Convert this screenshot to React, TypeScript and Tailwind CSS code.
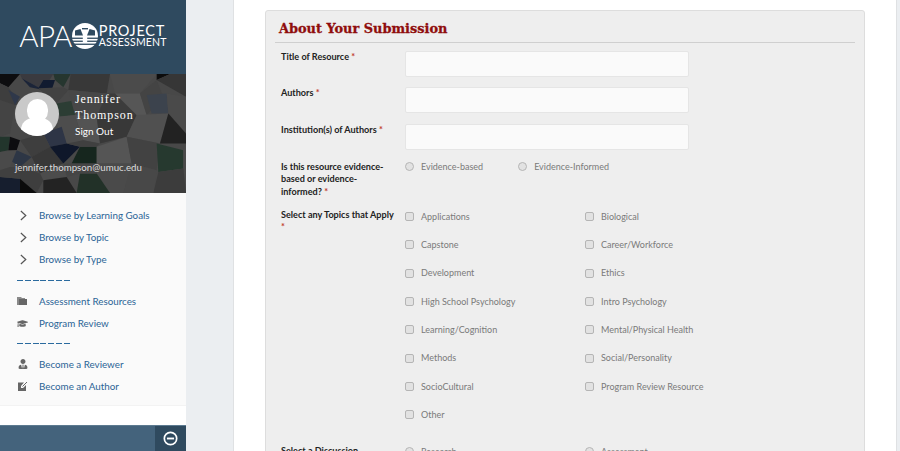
import React from "react";
import { FaGraduationCap, FaUserTie } from "react-icons/fa";

const polys: [string, string][] = [
  ["0,222 60,222 25,262 0,250", "#0d0d0f"],
  ["60,222 160,222 130,270 65,235", "#3a3a3f"],
  ["65,235 130,270 90,262", "#1b2438"],
  ["130,240 165,240 150,285 115,265", "#111b30"],
  ["160,222 212,222 190,262 165,240", "#26362f"],
  ["212,222 330,222 320,280 205,270", "#383838"],
  ["330,222 470,222 420,280 345,280", "#4b4b4b"],
  ["470,222 510,222 470,240", "#0c0c0c"],
  ["510,222 558,222 558,290 470,240", "#363636"],
  ["0,250 25,262 60,310 30,320 0,300", "#3e3e3e"],
  ["25,270 60,290 45,315", "#2f384a"],
  ["115,265 190,262 205,270 170,310", "#424242"],
  ["170,310 230,300 225,345 180,350", "#2c3d34"],
  ["205,270 320,280 290,350 225,345", "#474747"],
  ["320,280 345,280 410,345 290,350", "#3c3c3c"],
  ["345,280 420,280 440,345 410,345", "#565656"],
  ["420,280 470,240 490,290 440,345", "#444444"],
  ["440,285 500,280 505,340 455,340", "#3c434d"],
  ["500,280 558,290 558,400 505,340", "#4a4a4a"],
  ["0,300 45,315 30,400 0,410", "#444444"],
  ["170,350 225,345 250,420 180,440", "#4d4d4d"],
  ["130,400 185,380 200,430 150,440", "#2e3546"],
  ["225,345 290,350 300,430 250,420", "#535353"],
  ["290,350 410,345 380,410 300,430", "#383838"],
  ["410,345 505,340 480,430 380,410", "#505050"],
  ["505,340 558,400 558,430 480,430", "#222222"],
  ["0,410 30,410 25,450 0,455", "#22352c"],
  ["30,410 60,420 50,450 25,450", "#0d0d10"],
  ["60,420 130,400 150,440 95,470", "#3e3e3e"],
  ["50,450 95,470 60,500 30,480", "#2d3645"],
  ["0,455 50,450 30,500 0,510", "#4a4a4a"],
  ["95,470 150,440 190,490 120,520", "#383838"],
  ["150,440 200,430 240,440 190,490", "#0f172a"],
  ["240,440 290,440 290,490 215,490", "#16261e"],
  ["200,430 250,420 300,430 290,440 240,440", "#404040"],
  ["290,440 380,410 395,490 290,490", "#555555"],
  ["380,410 480,430 470,510 395,490", "#424242"],
  ["470,430 550,450 550,505 475,515", "#26392f"],
  ["550,450 558,430 558,578 550,505", "#4a4a4a"],
  ["475,515 550,505 558,578 460,578", "#3c3c3c"],
  ["395,490 470,510 460,578 370,578", "#484848"],
  ["290,490 395,490 370,578 330,578 290,520", "#4a4a4a"],
  ["240,520 290,520 330,578 230,578", "#223128"],
  ["190,490 290,490 290,520 240,520 200,530", "#454545"],
  ["120,520 190,490 200,530 130,540", "#4c4c4c"],
  ["130,540 200,530 230,578 130,578", "#232323"],
  ["60,500 120,520 130,540 110,578 60,535", "#3e3e3e"],
  ["60,535 110,578 60,578", "#0b0b0b"],
  ["0,530 60,535 60,578 0,578", "#161e2e"],
  ["0,510 30,500 60,500 60,535 0,530", "#404040"],
];

const Logo = () => (
  <div className="flex items-center text-white">
    <span className="text-[29.5px] leading-none font-light tracking-[-0.6px]">APA</span>
    <svg viewBox="0 0 26 26" className="w-[26px] h-[26px] shrink-0">
      <circle cx="13" cy="13" r="13" fill="#fff" />
      <g fill="#2f4a5f">
        <path d="M3 7.5 L8.5 6 L11 12.5 L3 12.5 Z" />
        <path d="M23 7.5 L17.5 6 L15 12.5 L23 12.5 Z" />
        <rect x="10" y="5" width="6" height="1.4" />
        <rect x="0" y="14.6" width="10.8" height="1.3" />
        <rect x="15.2" y="14.6" width="10.8" height="1.3" />
        <rect x="0" y="17.6" width="10.8" height="1.3" />
        <rect x="15.2" y="17.6" width="10.8" height="1.3" />
        <rect x="0" y="20.6" width="26" height="1.3" />
      </g>
    </svg>
    <div className="ml-[1px] flex flex-col justify-center">
      <span className="text-[14.5px] leading-[13px] tracking-[0.7px]">PROJECT</span>
      <span className="text-[10.5px] leading-[11px] tracking-[0.2px]">ASSESSMENT</span>
    </div>
  </div>
);

const Chevron = () => (
  <svg viewBox="0 0 8 12" className="w-[7px] h-[11px] ml-[3px]" fill="none" stroke="#555" strokeWidth="1.4">
    <path d="M1 0.8 L6.6 6 L1 11.2" />
  </svg>
);

const Folder = () => (
  <svg viewBox="0 0 10 8" className="w-[10px] h-[8px]">
    <path d="M0 0h4l1 1h3v1H2v6H0z" fill="#8a8a8a" />
    <rect x="2" y="2" width="8" height="6" fill="#666" />
  </svg>
);

const EditIcon = () => (
  <svg viewBox="0 0 10 10" className="w-[10px] h-[10px] ml-[1px]">
    <path d="M0 1.5h6L3 5v2h2l3-3v6H0z" fill="#666" />
    <path d="M4.5 5.5 L9 1" stroke="#666" strokeWidth="1" />
  </svg>
);

const Dashes = ({ second }: { second?: boolean }) => (
  <div className={`flex gap-[1.8px] ml-[17px] h-[1px] mb-[9px] ${second ? "mt-[9px]" : "mt-[10px]"}`}>
    {[0, 1, 2, 3, 4, 5, 6].map((i) => (
      <span key={i} className="block w-[6px] h-[1px] bg-[#2a6a9e]" />
    ))}
  </div>
);

const NavItem = ({ icon, label }: { icon: React.ReactNode; label: string }) => (
  <a className="flex items-center h-[22px] text-[#2a6496] text-[9.8px]">
    <span className="w-[39px] pl-[17px] flex items-center text-[#666]">{icon}</span>
    <span>{label}</span>
  </a>
);

const Required = () => <span className="text-[#c0392b]"> *</span>;

const Box = ({ round }: { round?: boolean }) => (
  <span
    className={`block w-[9px] h-[9px] shrink-0 border border-[#b5b5b5] bg-[#e2e2e2] ${round ? "rounded-full" : "rounded-[2px]"}`}
  />
);

const Option = ({ label, round }: { label: string; round?: boolean }) => (
  <label className="flex items-center gap-[7px] text-[#7a7a7a] text-[9px]">
    <Box round={round} />
    <span>{label}</span>
  </label>
);

const Field = ({ label, rowClass }: { label: string; rowClass: string }) => (
  <div className={`flex ${rowClass}`}>
    <div className="w-[130px] pl-[6px] text-[9.1px] font-bold text-[#222] leading-[12.5px]">
      {label}
      <Required />
    </div>
    <div className="w-[284px] h-[25.5px] rounded-[2px] border border-[#e5e5e5] bg-[#fafafa]" />
  </div>
);

const topics = [
  ["Applications", "Biological"],
  ["Capstone", "Career/Workforce"],
  ["Development", "Ethics"],
  ["High School Psychology", "Intro Psychology"],
  ["Learning/Cognition", "Mental/Physical Health"],
  ["Methods", "Social/Personality"],
  ["SocioCultural", "Program Review Resource"],
  ["Other", ""],
];

export default function App() {
  return (
    <div className="flex h-[451px] w-[900px] overflow-hidden bg-[#ebeef1] font-['Lato',sans-serif]">
      <aside className="w-[186px] h-full shrink-0 flex flex-col bg-white">
        <div className="h-[74px] bg-[#2f4a5f] flex items-center justify-center pb-[2px]">
          <Logo />
        </div>
        <div className="relative h-[119px] overflow-hidden bg-[#484848]">
          <svg viewBox="0 222 558 356" preserveAspectRatio="none" className="absolute inset-0 w-full h-full">
            {polys.map(([p, c], i) => (
              <polygon key={i} points={p} fill={c} />
            ))}
          </svg>
          <div className="relative flex pl-[15px] pt-[18px]">
            <div className="relative w-[44px] h-[44px] rounded-full overflow-hidden bg-[#c9c9c9] shrink-0">
              <span className="absolute left-[12px] top-[7px] w-[21px] h-[23px] rounded-full bg-white" />
              <span className="absolute left-[6px] top-[26px] w-[32px] h-[24px] rounded-full bg-white" />
            </div>
            <div className="ml-[16px] text-white">
              <div className="font-['Liberation_Serif',serif] text-[12px] leading-[15.5px] tracking-[0.9px]">
                Jennifer
                <br />
                Thompson
              </div>
              <div className="text-[10px] leading-[16px]">Sign Out</div>
            </div>
          </div>
          <div className="relative pl-[15px] mt-[21px] text-[#ddd] text-[9.7px] leading-[14px]">jennifer.thompson@umuc.edu</div>
        </div>
        <nav className="bg-[#fafafa] h-[213px] pt-[11px] border-b border-[#f3f3f3]">
          <NavItem icon={<Chevron />} label="Browse by Learning Goals" />
          <NavItem icon={<Chevron />} label="Browse by Topic" />
          <NavItem icon={<Chevron />} label="Browse by Type" />
          <Dashes />
          <NavItem icon={<Folder />} label="Assessment Resources" />
          <NavItem icon={<FaGraduationCap size={11} />} label="Program Review" />
          <Dashes second />
          <NavItem icon={<span className="ml-[1px]"><FaUserTie size={10} /></span>} label="Become a Reviewer" />
          <NavItem icon={<EditIcon />} label="Become an Author" />
        </nav>
        <div className="h-[19px] bg-white" />
        <div className="h-[26px] bg-[#44637c] border-t border-[#5c7a90] flex justify-end">
          <div className="w-[31px] bg-[#2f4a5f] flex items-center justify-center">
            <svg viewBox="0 0 16 16" className="w-[15px] h-[15px]" fill="none">
              <circle cx="8" cy="8" r="6.6" stroke="#fff" strokeWidth="1.8" />
              <rect x="4.2" y="7" width="7.6" height="2" fill="#fff" />
            </svg>
          </div>
        </div>
      </aside>

      <main className="flex-1 pl-[47px] pr-[3px]">
        <div className="h-full bg-white border-x border-[#dfe1e3] pl-[31px] pt-[10px]">
          <section className="w-[600px] h-[460px] bg-[#eeeeee] border border-[#dddddd] rounded-[3px] px-[9px]">
            <div className="h-[32px] border-b border-[#cfcfcf] flex items-end pb-[4px] pl-[4px]">
              <h2 className="font-['DejaVu_Serif',serif] font-bold text-[12.9px] leading-[18px] text-[#8f0d0d] [-webkit-text-stroke:0.3px_#8f0d0d]">About Your Submission</h2>
            </div>
            <div className="pt-[8px]">
              <Field rowClass="h-[36px]" label="Title of Resource" />
              <Field rowClass="h-[37px]" label="Authors" />
              <Field rowClass="h-[36.5px]" label="Institution(s) of Authors" />
              <div className="flex h-[48px]">
                <div className="w-[130px] pl-[6px] pr-[14px] text-[9.1px] font-bold text-[#222] leading-[12.5px]">
                  Is this resource evidence-based or evidence-informed?
                  <Required />
                </div>
                <div className="flex gap-[35px] h-[12px] items-center">
                  <Option round label="Evidence-based" />
                  <Option round label="Evidence-Informed" />
                </div>
              </div>
              <div className="flex">
                <div className="w-[130px] pl-[6px] pr-[6px] text-[9.1px] font-bold text-[#222] leading-[12.5px]">
                  Select any Topics that Apply
                  <Required />
                </div>
                <div className="grid grid-cols-[180px_180px] auto-rows-[28.4px]">
                  {topics.flat().map((t, i) => (t ? <div key={i} className="pt-[1px]"><Option label={t} /></div> : <div key={i} />))}
                </div>
              </div>
              <div className="flex pt-[9px]">
                <div className="w-[130px] pl-[6px] text-[9.1px] font-bold text-[#222] leading-[12.5px]">
                  Select a Discussion
                </div>
                <div className="grid grid-cols-[180px_180px]">
                  <Option round label="Research" />
                  <Option round label="Assessment" />
                </div>
              </div>
            </div>
          </section>
        </div>
      </main>
    </div>
  );
}
